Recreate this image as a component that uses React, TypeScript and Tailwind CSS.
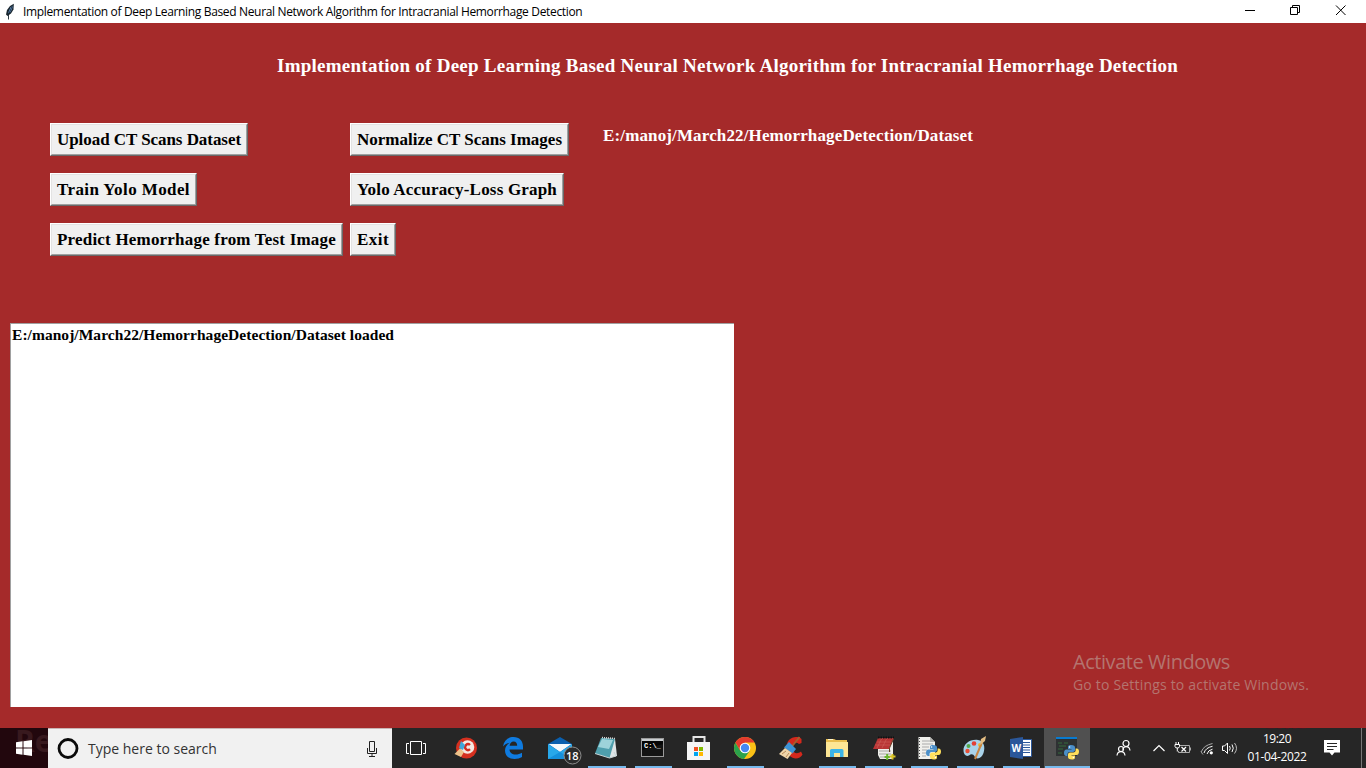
import type { ReactNode } from 'react';

const serif = "font-['Liberation_Serif','Times_New_Roman',serif] font-bold whitespace-nowrap";
const sans = "font-['Open_Sans','Segoe_UI',sans-serif] whitespace-nowrap";

const actions = [
  { label: 'Upload CT Scans Dataset', tracking: 'tracking-[-0.057px]' },
  { label: 'Normalize CT Scans Images', tracking: 'tracking-[-0.004px]' },
  { label: 'Train Yolo Model', tracking: 'tracking-[0.4px]' },
  { label: 'Yolo Accuracy-Loss Graph', tracking: 'tracking-[0.187px]' },
  { label: 'Predict Hemorrhage from Test Image', tracking: 'tracking-[0.198px]' },
  { label: 'Exit', tracking: 'tracking-[0.44px]' },
];

function TkButton({ tracking, children }: { tracking: string; children: ReactNode }) {
  return (
    <button className="flex h-[33px] border border-t-white border-l-white border-r-[#696969] border-b-[#696969]">
      <span className="flex h-full items-center border border-t-[#e3e3e3] border-l-[#e3e3e3] border-r-[#a0a0a0] border-b-[#a0a0a0] bg-[#f0f0f0] px-[5px]">
        <span className={`${serif} ${tracking} text-[17px] leading-none text-black`}>{children}</span>
      </span>
    </button>
  );
}

function Python({ x, y }: { x: number; y: number }) {
  return (
    <g transform={`translate(${x} ${y})`}>
      <path d="M7 0C4 0 4 1.500 4 2.500V4H7.500V4.600H2.500C.8 4.600 0 6 0 8C0 10 1 11 2.200 11H3.500V9C3.500 7.800 4.600 7 5.600 7H9C10 7 11 6.200 11 5V2.500C11 1 10 0 7 0Z" fill="#4b8fc8" />
      <path d="M8 14.500C11 14.500 11 13 11 12V10.500H7.500V9.900H12.500C14.200 9.900 15 8.500 15 6.500C15 4.500 14 3.500 12.800 3.500H11.600V5.500C11.600 6.800 10.500 7.500 9.400 7.500H6C5 7.500 4 8.300 4 9.500V12C4 13.500 5 14.500 8 14.500Z" fill="#ffe05c" />
      <circle cx="5.600" cy="2" r=".7" fill="#fff" />
      <circle cx="9.400" cy="12.500" r=".7" fill="#fff" />
    </g>
  );
}

const apps: { name: string; underline?: string; active?: boolean; art: ReactNode }[] = [
  { name: 'Comodo', art: <>
    <circle cx="20.500" cy="20" r="10.500" fill="#d5301f" />
    <circle cx="21.500" cy="19" r="6.800" fill="#f4e9e2" />
    <path d="M24 17A2.900 2.900 0 1 0 24 21.200" stroke="#d32c20" strokeWidth="2.400" fill="none" />
    <path d="M15 13L19 17L17 22L13 20Z" fill="#3fa6d8" />
    <path d="M8.500 26L14 20.500L18 24L15 29Z" fill="#eec28a" />
  </> },
  { name: 'Edge', art: <path d="M11 18.500C12 12.500 16 9 21.500 9C27.500 9 31 13 31 18.500V21.500H17.500C17.700 25 20.300 26.500 23.500 26.500C26 26.500 28 25.800 30 24.700V29C28 30.200 25.500 31 22.500 31C16.500 31 13 27.500 13 22.500C13 19 15 16.200 18 14.700C14.800 15.200 12.500 16.500 11 18.500ZM17.600 17.800H25.200C25.200 15.200 24 13.600 21.600 13.600C19.400 13.600 17.900 15.300 17.600 17.800Z" fill="#0f7be0" /> },
  { name: 'Mail', art: <>
    <path d="M10 16L22 9L34 16V31H10Z" fill="#0a5fae" />
    <path d="M10.500 16H33.500L22 24Z" fill="#f4f8fb" />
    <path d="M10 16L22 24L34 16V31H10Z" fill="#28a8ea" />
    <path d="M10 31L22 24L34 31Z" fill="#1590dc" />
    <circle cx="34.500" cy="27.500" r="8.500" fill="#2b2b2b" stroke="#8d8d8d" />
    <text x="34.300" y="31.500" textAnchor="middle" fontSize="11" fontWeight="600" fill="#fff" fontFamily="Open Sans, sans-serif">18</text>
  </> },
  { name: 'Notepad', underline: 'ml-[4px] w-[38px]', art: <>
    <path d="M18 10L31 11L33 28L25 30Z" fill="#dfe5e6" />
    <path d="M17 10L31 11L25.500 30L11 25.500Z" fill="#4f9fad" />
    <path d="M18 11L29 12L25 21L14 19Z" fill="#9ed3da" />
    <path d="M18 9.500L31 10.500" stroke="#dadada" strokeWidth="1.500" strokeDasharray="1 1" />
    <path d="M11 25.500L25.500 30L32 28L30 24" fill="none" stroke="#c8d4d6" />
  </> },
  { name: 'Command Prompt', underline: 'ml-[5px] w-[37px]', art: <>
    <rect x="11.500" y="10.500" width="22" height="18" fill="#050505" stroke="#9a9a9a" />
    <rect x="12" y="11" width="21" height="2" fill="#c9cdd0" />
    <text x="14" y="19.500" fontSize="7" fontWeight="700" fill="#fff" fontFamily="Liberation Mono, monospace">C:\_</text>
    <path d="M12 28V22L33 16V28Z" fill="#fff" opacity=".06" />
  </> },
  { name: 'Store', art: <>
    <path d="M17.500 15V9H28.500V15" stroke="#e6e6e6" strokeWidth="2" fill="none" />
    <path d="M11 14H34V32H11Z" fill="#f5f5f5" />
    <path d="M18 19H22V23H18Z" fill="#f25022" /><path d="M23 19H27V23H23Z" fill="#7fba00" />
    <path d="M18 24H22V28H18Z" fill="#00a4ef" /><path d="M23 24H27V28H23Z" fill="#ffb900" />
  </> },
  { name: 'Chrome', underline: 'ml-[5px] w-[37px]', art: <>
    <circle cx="23" cy="20" r="11" fill="#fbc116" />
    <path d="M13.470 14.500A11 11 0 0 0 22 31L27.800 22.700L23 20L18.300 22.700Z" fill="#2ba24c" />
    <path d="M13.470 14.500A11 11 0 0 1 32.530 14.500H23L18.300 22.700Z" fill="#e33b2e" />
    <circle cx="23" cy="20" r="5.300" fill="#fff" /><circle cx="23" cy="20" r="4.200" fill="#4688f1" />
  </> },
  { name: 'CCleaner', art: <>
    <path d="M33.500 15V11C30 8 24.500 8.500 21 12C16.500 17 18.500 27 24.500 29.800C28.500 31.500 32.500 30 34.500 26.500L33 23.500C29.500 26.500 25 25.500 24.300 20.500C23.800 15.500 28 13 31 16Z" fill="#d5281c" />
    <path d="M31.500 9L23.500 19" stroke="#a36030" strokeWidth="2" />
    <path d="M21 14L28 21L24.500 25.500L16 19.500Z" fill="#3d94d6" />
    <path d="M17 20L24 25L19.500 31L11 26Z" fill="#efd5a9" />
    <path d="M14 26L18 23M18 29L21 25" stroke="#b98b58" />
  </> },
  { name: 'File Explorer', underline: 'ml-[5px] w-[37px]', art: <>
    <path d="M12 12.500V11H20L22 12H33V29H12Z" fill="#e9bd4e" />
    <path d="M12 14H34V29H12Z" fill="#fde695" />
    <path d="M14 11.500H19" stroke="#fff4cd" />
    <path d="M16 29V22.500Q16 21 17.500 21H28Q29.500 21 29.500 22.500V29H26V25H20V29Z" fill="#3cb4e7" />
  </> },
  { name: 'Notes', underline: 'ml-[5px] w-[37px]', art: <>
    <path d="M18 12H33V31H20L18 27Z" fill="#eeeeea" />
    <path d="M19 23H31M19 26H31M20 29H28" stroke="#a7a7a5" />
    <path d="M18 10H34L29 21H13Z" fill="#b93535" />
    <path d="M17 14H31M15 17H30M22 10L17 20M27 10L22 20" stroke="#d06a63" strokeWidth=".5" />
    <path d="M18 9.500H34" stroke="#111" strokeWidth="2" strokeDasharray="1.500 1" />
    <path d="M33.500 11L29.500 20V24" fill="none" stroke="#674126" />
    <path d="M24.500 29H30M27.200 26V32" stroke="#69b530" strokeWidth="2" />
    <path d="M29.500 28.500H35.500M32.500 26V31.500" stroke="#d9c425" strokeWidth="2" />
  </> },
  { name: 'IDLE', underline: 'ml-[5px] w-[37px]', art: <>
    <path d="M12.500 9H24L29 14V31H12.500Z" fill="#f0f0ec" />
    <path d="M24 9V14H29" fill="#b4b4b0" />
    <path d="M16 13H24M16 16H27M16 19H23M16 22H21M16 25H20M16 28H20" stroke="#aaa" />
    <path d="M13.500 10V31" stroke="#4a4a4a" strokeDasharray="1 2" />
    <Python x={20} y={17} />
  </> },
  { name: 'Paint', underline: 'ml-[5px] w-[37px]', art: <>
    <path d="M11.500 23C11 16 18 11 26 12C32 13 33.500 19 31.500 25C30 30 25 32 23 29C21 25.500 19 26 17 27.500C14 29 11.800 26.500 11.500 23Z" fill="#a9d3ea" />
    <circle cx="15.500" cy="23" r="2.200" fill="#e84e35" /><circle cx="16.500" cy="18" r="2" fill="#52a84b" />
    <circle cx="22" cy="15.500" r="2.300" fill="#e44035" /><circle cx="28" cy="17" r="2" fill="#edb83a" />
    <path d="M31 12L23 31" stroke="#c88643" strokeWidth="2" />
    <path d="M28 17L29 11L34 8L33 13Z" fill="#e4bd83" />
  </> },
  { name: 'Word', underline: 'ml-[5px] w-[37px]', art: <>
    <path d="M24 11.500H33.500V28.500H24Z" fill="#fff" stroke="#2b579a" />
    <path d="M25 14.500H32M25 17H32M25 19.500H32M25 22H32M25 24.500H32" stroke="#2b579a" />
    <path d="M12 11L25 9V31L12 29Z" fill="#2b579a" />
    <text x="18.400" y="23.800" textAnchor="middle" fontSize="10" fontWeight="700" fill="#fff" fontFamily="Open Sans, sans-serif">W</text>
  </> },
  { name: 'Python', underline: 'ml-px w-[45px]', active: true, art: <>
    <path d="M12 9H33V28H12Z" fill="#2e3233" />
    <path d="M12 9H33V11H12Z" fill="#087bd0" />
    <path d="M14 15H18M20 15H24M15 18H22M14 21H19M14 25H18" stroke="#356a3d" />
    <Python x={20} y={17} />
  </> },
];

const watermarkTitle = 'tracking-[-0.45px]';

export default function App() {
  return (
    <div className="flex h-[768px] w-[1366px] flex-col overflow-hidden bg-[#a52a2a]">
      <header className="flex h-[23px] shrink-0 items-center bg-white">
        <svg className="ml-[4px] h-[18px] w-[14px]" viewBox="0 0 14 18">
          <path d="M9.800 .8L6 3L3 7L2 11.500L3.500 13L7 10.500L9.500 6.500Z" fill="#1a2730" />
          <path d="M9 2.500L6.500 4.500L4.500 9L4.500 10.500L6.500 9L8 6Z" fill="#6ca0dc" />
          <path d="M8.500 2.500L4.500 11.500V16.500" stroke="#1a2730" strokeWidth=".9" fill="none" />
        </svg>
        <h1 className={`${sans} ml-[5px] text-[12px] leading-none tracking-[-0.342px] text-black`}>Implementation of Deep Learning Based Neural Network Algorithm for Intracranial Hemorrhage Detection</h1>
        <div className="mr-px ml-auto flex">
          <svg className="h-[23px] w-[46px]" viewBox="0 0 46 23"><path d="M18 10.500H28" stroke="#000" /></svg>
          <svg className="h-[23px] w-[46px]" viewBox="0 0 46 23" fill="none" stroke="#000"><path d="M17.500 7.500H24.500V14.500H17.500ZM19.500 7.500V5.500H26.500V12.500H24.500" /></svg>
          <svg className="h-[23px] w-[46px]" viewBox="0 0 46 23"><path d="M17 5.500L26.500 15M26.500 5.500L17 15" stroke="#000" /></svg>
        </div>
      </header>

      <main className="flex h-[705px] shrink-0 flex-col">
        <h2 className={`${serif} mt-[33px] ml-[277px] h-[20px] text-[19px] leading-[20px] tracking-[0.25px] text-white`}>Implementation of Deep Learning Based Neural Network Algorithm for Intracranial Hemorrhage Detection</h2>
        <div className="mt-[47px] ml-[50px] flex h-[133px]">
          <div className="grid grid-cols-[300px_253px] content-start gap-y-[17px]">
            {actions.map((a) => (
              <div key={a.label} className="flex"><TkButton tracking={a.tracking}>{a.label}</TkButton></div>
            ))}
          </div>
          <p className={`${serif} mt-[3px] h-[20px] text-[17px] leading-[20px] tracking-[0.135px] text-white`}>E:/manoj/March22/HemorrhageDetection/Dataset</p>
        </div>
        <div className="mt-[67px] flex justify-between pr-[57px] pl-[10px]">
          <section className="h-[384px] w-[724px] border-t border-l border-[#a0a0a0] bg-white pt-[2px] pl-px">
            <p className={`${serif} text-[15.5px] leading-[18px] tracking-[0.043px] text-black`}>E:/manoj/March22/HemorrhageDetection/Dataset loaded</p>
          </section>
          <aside className={`${sans} w-[236px] pt-[327px] text-[#b4746f]`}>
            <p className={`${watermarkTitle} text-[20px] leading-[24px]`}>Activate Windows</p>
            <p className="mt-px text-[14px] leading-[20px] tracking-[0.19px]">Go to Settings to activate Windows.</p>
          </aside>
        </div>
      </main>

      <footer className="flex h-[40px] shrink-0 bg-[#262626]">
        <div className="relative flex w-[48px] items-center justify-center overflow-hidden bg-[#22070d]">
          <span className="absolute top-[-7px] left-[15px] font-['Open_Sans',sans-serif] text-[30px] leading-[40px] font-bold text-[#38191e]">Re</span>
          <svg className="relative h-[16px] w-[16px]" viewBox="0 0 16 16" fill="#fff">
            <path d="M0 2.200L6.500 1.300V7.500H0ZM7.500 1.200L16 0V7.500H7.500ZM0 8.500H6.500V14.700L0 13.800ZM7.500 8.500H16V16L7.500 14.800Z" />
          </svg>
        </div>
        <div className="flex w-[344px] items-center border-t border-[#c9b4b4] bg-[#f1f1f1] pr-[12px] pl-[8px]">
          <svg className="h-[24px] w-[24px]" viewBox="0 0 24 24"><circle cx="12" cy="11.500" r="9" fill="none" stroke="#0a0a0a" strokeWidth="2.800" /></svg>
          <span className={`${sans} ml-[8px] text-[14px] leading-[20px] text-[#333]`}>Type here to search</span>
          <svg className="ml-auto h-[18px] w-[16px]" viewBox="0 0 16 18" fill="none" stroke="#222">
            <path d="M5.500 1.500H10.500V11.500H5.500ZM3.500 8V13.500H12.500V8M8 13.500V16.500M5 16.500H11" />
          </svg>
        </div>
        <div className="flex w-[54px] items-center">
          <svg className="ml-[13px] h-[18px] w-[22px]" viewBox="0 0 22 18" fill="none" stroke="#fff">
            <path d="M5.500 2.500H16.500V15.500H5.500ZM4 4.500H1.500V14.500H4M18 4.500H20.500V14.500H18" />
          </svg>
        </div>
        <nav className="flex">
          {apps.map((a) => (
            <div key={a.name} className={`relative w-[46px] ${a.active ? 'bg-[#505050]' : ''}`}>
              <svg viewBox="0 0 46 40" className="h-[40px] w-[46px] overflow-visible">{a.art}</svg>
              {a.underline && <div className={`absolute bottom-0 left-0 h-[2px] bg-[#76b9ed] ${a.underline}`} />}
            </div>
          ))}
        </nav>
        <div className="flex flex-1 items-center">
          <svg className="ml-[26px] h-[20px] w-[16px]" viewBox="0 0 16 20" fill="none" stroke="#fff" strokeWidth="1.200">
            <circle cx="10" cy="5.500" r="3" /><path d="M6.500 11.500Q8 8.700 10 8.700Q13.500 8.700 14 12.500" />
            <circle cx="5" cy="11" r="2.500" /><path d="M1 17.500Q1.500 13.700 5 13.700Q8.500 13.700 9 17.500" />
          </svg>
          <svg className="ml-[20px] h-[20px] w-[14px]" viewBox="0 0 14 20" fill="none" stroke="#fff" strokeWidth="1.200"><path d="M1.500 13L7 7.500L12.500 13" /></svg>
          <svg className="ml-[8px] h-[20px] w-[18px]" viewBox="0 0 18 20" fill="none">
            <path d="M6 7.500H15.500V14.500H4.500V13M16.500 9.500V12.500" stroke="#aaa" />
            <path d="M7.500 9L12 13.500M12 9L7.500 13.500" stroke="#fff" strokeWidth="1.200" />
            <path d="M2 4V6M4.500 4V6M1 6.500H5.500V8.500Q5.500 10 3.300 10Q1 10 1 8.500ZM3.300 10V13.500" stroke="#fff" />
          </svg>
          <svg className="ml-[8px] h-[20px] w-[16px]" viewBox="0 0 16 20" fill="none" stroke="#fff">
            <path d="M1.500 13.500Q3.500 7.500 12.500 5.500" stroke="#aaa" /><path d="M4 15Q5.500 9.700 12.500 8.300M7 16Q8 12.200 12.500 11.200" />
            <circle cx="11.300" cy="14.800" r="1.600" fill="#fff" stroke="none" />
            <path d="M1 13Q1.500 15 3 16.500" stroke="#aaa" />
          </svg>
          <svg className="ml-[5px] h-[20px] w-[18px]" viewBox="0 0 18 20" fill="none" stroke="#fff">
            <path d="M1.500 8H3.500L6.500 5V15.500L3.500 12.500H1.500Z" /><path d="M8.500 8Q10 10.200 8.500 12.500M11 6.500Q13.500 10.200 11 14" />
            <path d="M13.500 5Q17.500 10.200 13.500 15.500" stroke="#bbb" />
          </svg>
          <div className={`${sans} relative ml-[6px] flex h-[40px] w-[64px] flex-col items-center overflow-hidden text-[12px] leading-[18px] text-white`}>
            <span className="absolute top-[-23px] left-[18px] text-[22px] leading-[30px] font-bold text-[#3c1a24]">ems</span>
            <span className="relative mt-[2px] tracking-[-0.5px]">19:20</span>
            <span className="relative tracking-[-0.36px]">01-04-2022</span>
          </div>
          <svg className="ml-[14px] h-[20px] w-[18px]" viewBox="0 0 18 20">
            <path d="M1 2H17V14.500H11.500L9 17.500L6.500 14.500H1Z" fill="#fff" />
            <path d="M4 5.500H14M4 8.500H14M4 11.500H10.500" stroke="#262626" />
          </svg>
          <div className="mr-[4px] ml-auto h-full w-px bg-[#777]" />
        </div>
      </footer>
    </div>
  );
}
